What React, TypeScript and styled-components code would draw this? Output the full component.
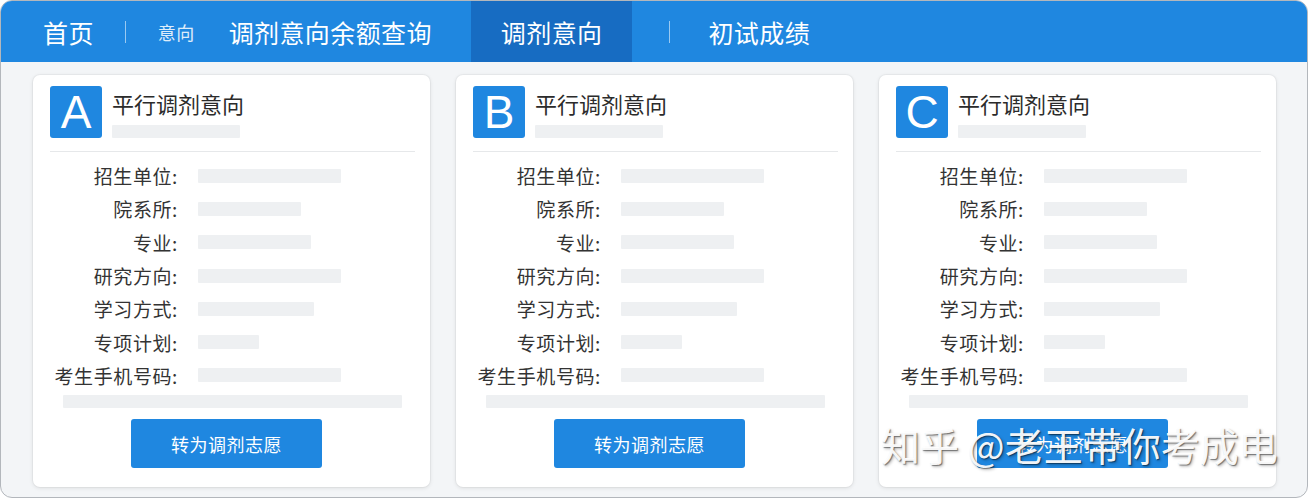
import { FC, Fragment } from "react";
import styled, { createGlobalStyle } from "styled-components";

const GlobalStyle = createGlobalStyle`
  * { box-sizing: border-box; }
  body {
    margin: 0;
    background: #ffffff;
    font-family: "Noto Sans CJK SC", "Noto Sans", sans-serif;
  }
`;

const Frame = styled.div`
  position: relative;
  width: 1308px;
  height: 498px;
  border: 1px solid #b3b7bc;
  border-radius: 12px;
  overflow: hidden;
  background: #f3f5f7;
`;

const NavBar = styled.nav`
  display: flex;
  align-items: stretch;
  height: 61px;
  background: #1f87e0;
  color: #ffffff;
`;

const NavItem = styled.div<{ $active?: boolean; $small?: boolean; $pad?: string; $ml?: number }>`
  display: flex;
  align-items: center;
  margin-left: ${({ $ml }) => $ml ?? 0}px;
  padding: ${({ $pad }) => $pad ?? "0"};
  font-size: ${({ $small }) => ($small ? "18px" : "25px")};
  opacity: ${({ $small }) => ($small ? 0.85 : 1)};
  background: ${({ $active }) => ($active ? "#176cc2" : "transparent")};
  letter-spacing: 0.4px;
  white-space: nowrap;
`;

const NavDivider = styled.div<{ $margin: string }>`
  align-self: center;
  width: 1px;
  height: 22px;
  margin: ${({ $margin }) => $margin};
  background: rgba(255, 255, 255, 0.55);
`;

const CardGrid = styled.div`
  display: grid;
  grid-template-columns: repeat(3, 397px);
  gap: 26px;
  padding: 13px 0 0 32px;
`;

const Card = styled.div`
  height: 412px;
  padding: 11px 15px 0 17px;
  background: #ffffff;
  border-radius: 7px;
  box-shadow: 0 1px 4px rgba(0, 0, 0, 0.1), 0 0 0 1px rgba(0, 0, 0, 0.03);
  display: flex;
  flex-direction: column;
`;

const CardHead = styled.div`
  display: flex;
  gap: 10px;
  padding-bottom: 13px;
  border-bottom: 1px solid #e6e8ea;
`;

const Badge = styled.div`
  width: 52px;
  height: 52px;
  border-radius: 3px;
  background: #1f87e0;
  color: #ffffff;
  display: flex;
  align-items: center;
  justify-content: center;
  font-family: "Liberation Sans", sans-serif;
  font-size: 46px;
  line-height: 1;
`;

const HeadText = styled.div`
  display: flex;
  flex-direction: column;
  justify-content: space-between;
`;

const Title = styled.div`
  font-size: 22px;
  line-height: 30px;
  color: #2b2b2b;
  margin-top: 2px;
`;

const Placeholder = styled.div<{ $w: number; $h?: number }>`
  width: ${({ $w }) => $w}px;
  height: ${({ $h }) => $h ?? 14}px;
  background: #eef0f2;
  border-radius: 1px;
`;

const Fields = styled.div`
  display: grid;
  grid-template-columns: 128px 1fr;
  grid-auto-rows: 33.3px;
  column-gap: 20px;
  align-items: center;
  margin-top: 7px;
`;

const Label = styled.div`
  text-align: right;
  font-size: 19px;
  letter-spacing: 0.6px;
  color: #333333;
  white-space: nowrap;
`;

const WideBar = styled(Placeholder)`
  margin: 3px 0 0 13px;
`;

const ActionButton = styled.button`
  align-self: flex-start;
  margin: 11px 0 0 81px;
  width: 191px;
  height: 49px;
  border: none;
  border-radius: 3px;
  background: #1f87e0;
  color: #ffffff;
  font-family: inherit;
  font-size: 18px;
  letter-spacing: 0.5px;
`;

const Watermark = styled.div`
  position: absolute;
  left: 880px;
  top: 421px;
  font-size: 39px;
  line-height: 44px;
  color: rgba(255, 255, 255, 0.96);
  text-shadow: 1px 1px 1px rgba(0, 0, 0, 0.45), 2px 2px 3px rgba(0, 0, 0, 0.25);
  white-space: nowrap;
  pointer-events: none;
`;

const fields: [string, number][] = [
  ["招生单位:", 143],
  ["院系所:", 103],
  ["专业:", 113],
  ["研究方向:", 143],
  ["学习方式:", 116],
  ["专项计划:", 61],
  ["考生手机号码:", 143],
];

const IntentCard: FC<{ letter: string }> = ({ letter }) => (
  <Card>
    <CardHead>
      <Badge>{letter}</Badge>
      <HeadText>
        <Title>平行调剂意向</Title>
        <Placeholder $w={128} $h={13} />
      </HeadText>
    </CardHead>
    <Fields>
      {fields.map(([label, w]) => (
        <Fragment key={label}>
          <Label>{label}</Label>
          <Placeholder $w={w} />
        </Fragment>
      ))}
    </Fields>
    <WideBar $w={339} $h={13} />
    <ActionButton>转为调剂志愿</ActionButton>
  </Card>
);

const App: FC = () => (
  <>
    <GlobalStyle />
    <Frame>
      <NavBar>
        <NavItem $pad="0 0 0 42px">首页</NavItem>
        <NavDivider $margin="0 32px 0 31px" />
        <NavItem $small>意向</NavItem>
        <NavItem $pad="0 0 0 34px">调剂意向余额查询</NavItem>
        <NavItem $active $ml={39} $pad="0 30px">
          调剂意向
        </NavItem>
        <NavDivider $margin="0 38px 0 37px" />
        <NavItem>初试成绩</NavItem>
      </NavBar>
      <CardGrid>
        {["A", "B", "C"].map((l) => (
          <IntentCard key={l} letter={l} />
        ))}
      </CardGrid>
      <Watermark>知乎 @老王带你考成电</Watermark>
    </Frame>
  </>
);

export default App;
